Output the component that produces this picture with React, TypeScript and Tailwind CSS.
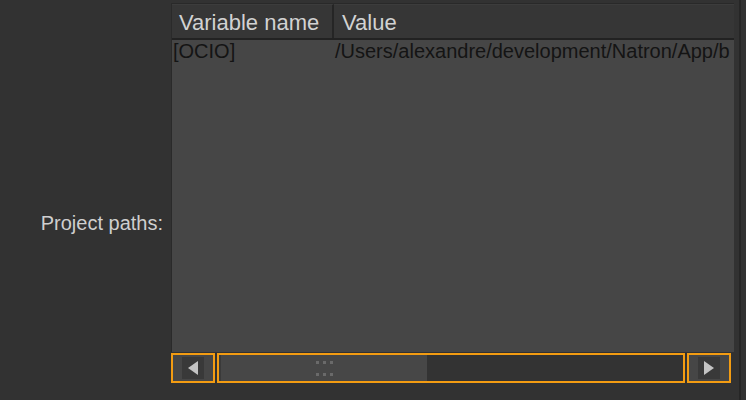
import React from 'react';

const font = { fontFamily: '"Liberation Sans", Arial, sans-serif' };

function Grip() {
  return (
    <div className="flex flex-col gap-[9px]">
      {[0, 1].map((r) => (
        <div key={r} className="flex gap-[4px]">
          {[0, 1, 2].map((c) => (
            <div key={c} className="w-[3px] h-[3px] bg-[#6a6a6a]" />
          ))}
        </div>
      ))}
    </div>
  );
}

export default function App() {
  return (
    <div className="w-[746px] h-[400px] bg-[#323232] flex overflow-hidden" style={font}>
      {/* Label column */}
      <div className="w-[171px] shrink-0 pt-[211px] pr-[8px] text-right">
        <span className="text-[20px] text-[#cfcfcf] leading-[24px]">Project paths:</span>
      </div>

      {/* Table */}
      <div className="w-[563px] shrink-0 flex flex-col pt-[3px]">
        <div className="flex flex-col border-l border-[#2a2a2a]">
          {/* Header */}
          <div className="h-[37px] flex bg-[#363636] border-t border-[#292929] border-b-2 border-b-[#222]">
            <div className="w-[162px] shrink-0 pl-[7px] pt-[2px] flex items-center border-r-2 border-[#252525] border-t border-t-[#3c3c3c]">
              <span className="text-[22px] text-[#d2d2d2]">Variable name</span>
            </div>
            <div className="flex-1 pl-[8px] pt-[2px] flex items-center border-t border-t-[#3c3c3c]">
              <span className="text-[22px] text-[#d2d2d2]">Value</span>
            </div>
          </div>

          {/* Body */}
          <div className="h-[312px] bg-[#464646] flex overflow-hidden">
            <div className="w-[162px] shrink-0 pl-[1px] pt-[1px] text-[20px] leading-[20px] text-[#141414]">[OCIO]</div>
            <div className="flex-1 pl-[1px] pt-[1px] text-[20px] leading-[20px] text-[#141414] whitespace-nowrap overflow-hidden">
              /Users/alexandre/development/Natron/App/b
            </div>
          </div>
        </div>

        {/* Horizontal scrollbar */}
        <div className="h-[30px] mt-[1px] flex pr-[3px]">
          <div className="w-[44px] h-[30px] border-2 border-[#f39c12] bg-[#464646] flex items-center justify-center">
            <div className="w-[22px] h-[22px] bg-[#393939] flex items-center justify-center">
              <svg width="12" height="14" viewBox="0 0 12 14">
                <polygon points="11,0 11,14 1,7" fill="#c4c4c4" />
              </svg>
            </div>
          </div>
          <div className="flex-1 ml-[2px] h-[30px] border-2 border-[#f39c12] bg-[#333] flex">
            <div className="w-[208px] h-full bg-[#474747] border-l-2 border-[#3a3a3a] flex items-center justify-center">
              <Grip />
            </div>
          </div>
          <div className="w-[44px] ml-[2px] h-[30px] border-2 border-[#f39c12] bg-[#464646] flex items-center justify-center">
            <div className="w-[22px] h-[22px] bg-[#393939] flex items-center justify-center">
              <svg width="12" height="14" viewBox="0 0 12 14">
                <polygon points="1,0 1,14 11,7" fill="#c4c4c4" />
              </svg>
            </div>
          </div>
        </div>
      </div>

      {/* Outer frame edge */}
      <div className="w-[5px] shrink-0" />
      <div className="w-[2px] shrink-0 bg-[#262626]" />
    </div>
  );
}
